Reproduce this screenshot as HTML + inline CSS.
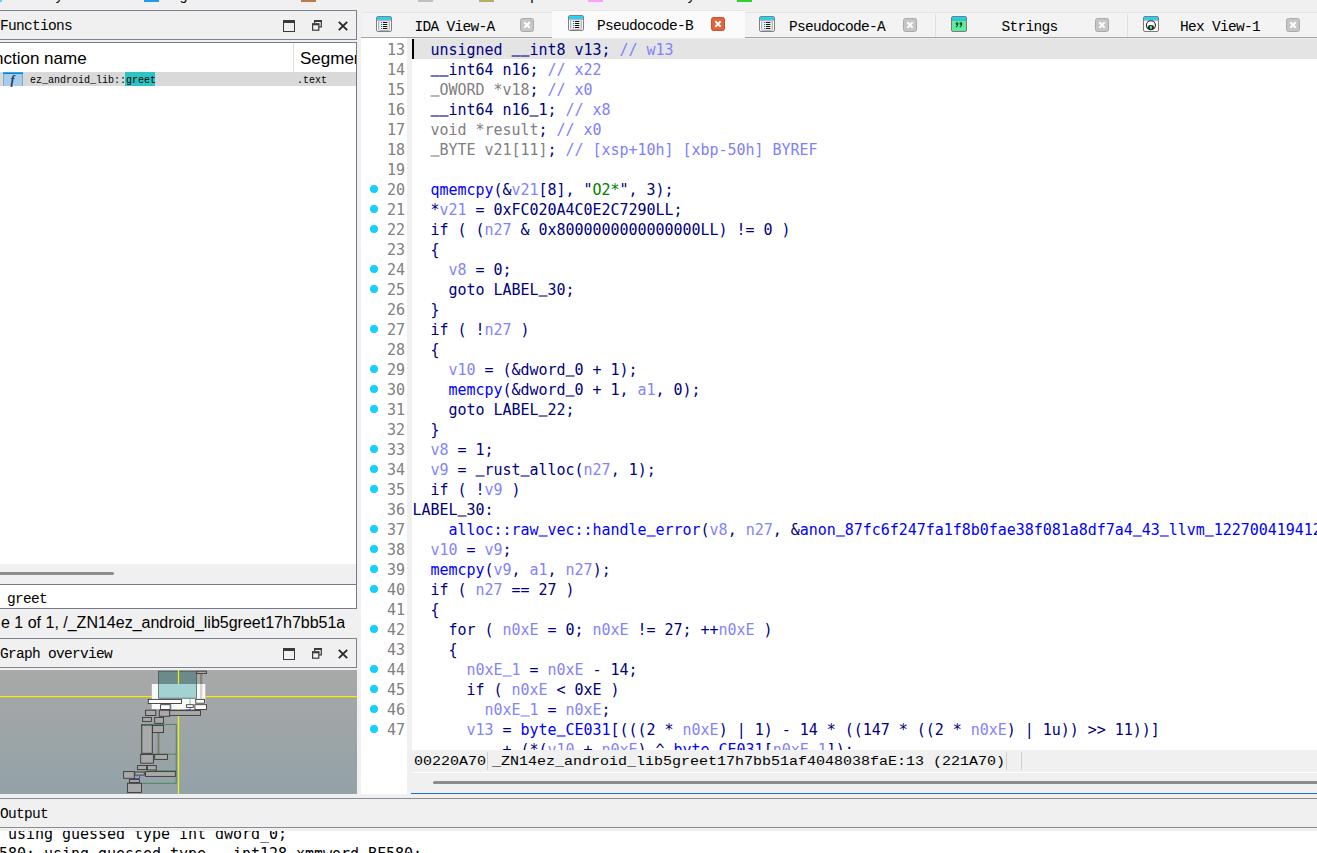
<!DOCTYPE html>
<html>
<head>
<meta charset="utf-8">
<title>IDA</title>
<style>
html,body{margin:0;padding:0;}
body{width:1317px;height:853px;overflow:hidden;background:#f0f0f0;position:relative;font-family:"Liberation Mono",monospace;color:#000;}
.abs{position:absolute;}
.ui{font-family:"Liberation Mono",monospace;font-size:14.5px;letter-spacing:-0.7px;line-height:16px;white-space:pre;color:#000;}
.sans{font-family:"Liberation Sans",sans-serif;font-size:17px;line-height:20px;white-space:pre;color:#000;}
.small{font-family:"Liberation Mono",monospace;font-size:10px;line-height:12px;white-space:pre;color:#000;}
.cf{font-family:"DejaVu Sans Mono","Liberation Mono",monospace;font-size:15px;letter-spacing:-0.03px;line-height:20px;white-space:pre;}
#code{left:412.5px;top:40px;width:905px;height:710px;overflow:hidden;color:#000080;}
#code{white-space:normal;} #code div{height:20px;white-space:pre;}
#nums{left:361px;top:40px;width:44px;height:710px;overflow:hidden;color:#808080;text-align:right;}
#nums{white-space:normal;} #nums div{height:20px;white-space:pre;}
.dot{position:absolute;left:369.6px;width:8.7px;height:8.7px;border-radius:50%;background:#14d0fe;margin-top:-0.4px;}
.u{position:relative;top:-3px;text-shadow:0 0.6px 0 currentColor;}
.t{color:#000080;} .g{color:#808080;} .c{color:#8080ff;} .v{color:#8484fa;} .f{color:#0000ff;} .s{color:#008000;}
</style>
</head>
<body>
<!-- top legend strip -->
<div class="abs" style="left:0;top:0;width:2px;height:2px;background:#4fd8f8"></div>
<div class="abs" style="left:144px;top:0;width:15px;height:2px;background:#1e9df0"></div>
<div class="abs" style="left:301px;top:0;width:15px;height:2px;background:#c07850"></div>
<div class="abs" style="left:418px;top:0;width:15px;height:2px;background:#c0c0c0"></div>
<div class="abs" style="left:479px;top:0;width:15px;height:2px;background:#b0b060"></div>
<div class="abs" style="left:588px;top:0;width:15px;height:2px;background:#ff9cff"></div>
<div class="abs" style="left:737px;top:0;width:15px;height:2px;background:#30d030"></div>

<div class="abs ui" style="left:7px;top:-12px;">Library function</div>
<div class="abs ui" style="left:163px;top:-12px;">Regular function</div>
<div class="abs ui" style="left:320px;top:-12px;">Instruction</div>
<div class="abs ui" style="left:437px;top:-12px;">Data</div>
<div class="abs ui" style="left:498px;top:-12px;">Unexplored</div>
<div class="abs ui" style="left:607px;top:-12px;">External symbol</div>
<div class="abs ui" style="left:756px;top:-12px;">Lumina function</div>
<!-- Functions title -->
<div class="abs" style="left:-2px;top:10px;width:357px;height:28px;border:1px solid #7c8290;background:#f0f0f0"></div>
<div class="abs ui" style="left:0px;top:18px;">Functions</div>
<svg class="abs" style="left:283px;top:20px" width="12" height="12" viewBox="0 0 12 12"><rect x="0.5" y="0.5" width="11" height="11" fill="none" stroke="#3a3a3a"/><rect x="0" y="0" width="12" height="3" fill="#3a3a3a"/></svg><svg class="abs" style="left:312px;top:20px" width="10" height="11" viewBox="0 0 10 11"><path d="M2.6 3 V0.8 H9.3 V6.8 H7" fill="none" stroke="#3a3a3a" stroke-width="1.2"/><rect x="2" y="0" width="7.9" height="2" fill="#3a3a3a"/><rect x="0.6" y="4" width="6.2" height="6.2" fill="none" stroke="#3a3a3a" stroke-width="1.2"/><rect x="0" y="3.3" width="7.4" height="2" fill="#3a3a3a"/></svg><svg class="abs" style="left:338px;top:21px" width="10" height="10" viewBox="0 0 10 10"><path d="M0.8 0.8 L9.2 9.2 M9.2 0.8 L0.8 9.2" stroke="#2a2a2a" stroke-width="1.9" fill="none"/></svg>

<!-- Functions list -->
<div class="abs" style="left:-2px;top:42px;width:357px;height:541px;border:1px solid #747c8c;background:#fff"></div>
<div class="abs sans" style="left:-6px;top:49px;">nction name</div>
<div class="abs" style="left:293px;top:43px;width:1px;height:29px;background:#e0e0e0"></div>
<div class="abs sans" style="left:300px;top:49px;width:56px;overflow:hidden">Segment</div>
<div class="abs" style="left:0;top:72px;width:356px;height:14px;background:#d9d9d9"></div>
<div class="abs" style="left:3px;top:72px;width:20px;height:14px;background:#a8cceb;border-left:1px solid #86a6c6;border-right:1px solid #86a6c6;box-sizing:border-box"></div><div class="abs" style="left:3px;top:72px;width:20px;height:1px;background:#18b4f6"></div><div class="abs" style="left:3px;top:73px;width:20px;height:1px;background:#1a7cbc"></div>
<div class="abs" style="left:10.5px;top:72.5px;font-family:'Liberation Serif',serif;font-style:italic;font-weight:bold;font-size:12px;line-height:14px;color:#183860">f</div>
<div class="abs" style="left:125px;top:72px;width:30px;height:14px;background:#2ac4c4"></div><div class="abs small" style="left:30px;top:75px;">ez_android_lib::greet</div>
<div class="abs small" style="left:297px;top:75px;">.text</div>
<!-- h scrollbar -->
<div class="abs" style="left:0;top:564px;width:356px;height:20px;background:#f0f0f0"></div>
<div class="abs" style="left:-4px;top:572px;width:118px;height:3px;border-radius:2px;background:#8c8c8c"></div>
<!-- search -->
<div class="abs" style="left:0;top:584px;width:356px;height:25px;background:#fff;border-top:1px solid #747c8c;border-bottom:1px solid #747c8c;box-sizing:border-box"></div>
<div class="abs ui" style="left:7px;top:591px;">greet</div>
<div class="abs" style="left:356px;top:42px;width:1px;height:567px;background:#747c8c"></div>
<!-- status -->
<div class="abs sans" style="left:1px;top:613px;width:344px;overflow:hidden;font-size:16px">e 1 of 1, /_ZN14ez_android_lib5greet17h7bb51af4048038faE</div>

<!-- Graph overview title -->
<div class="abs" style="left:-2px;top:638px;width:357px;height:28px;border:1px solid #7c8290;background:#f0f0f0"></div>
<div class="abs ui" style="left:0px;top:646px;">Graph overview</div>
<svg class="abs" style="left:283px;top:648px" width="12" height="12" viewBox="0 0 12 12"><rect x="0.5" y="0.5" width="11" height="11" fill="none" stroke="#3a3a3a"/><rect x="0" y="0" width="12" height="3" fill="#3a3a3a"/></svg><svg class="abs" style="left:312px;top:648px" width="10" height="11" viewBox="0 0 10 11"><path d="M2.6 3 V0.8 H9.3 V6.8 H7" fill="none" stroke="#3a3a3a" stroke-width="1.2"/><rect x="2" y="0" width="7.9" height="2" fill="#3a3a3a"/><rect x="0.6" y="4" width="6.2" height="6.2" fill="none" stroke="#3a3a3a" stroke-width="1.2"/><rect x="0" y="3.3" width="7.4" height="2" fill="#3a3a3a"/></svg><svg class="abs" style="left:338px;top:649px" width="10" height="10" viewBox="0 0 10 10"><path d="M0.8 0.8 L9.2 9.2 M9.2 0.8 L0.8 9.2" stroke="#2a2a2a" stroke-width="1.9" fill="none"/></svg>
<svg class="abs" style="left:0;top:670px" width="357" height="124" viewBox="0 0 357 124"><defs><linearGradient id="gg" x1="0" y1="0" x2="0" y2="1"><stop offset="0" stop-color="#a9a9a9"/><stop offset="0.25" stop-color="#a3a6a7"/><stop offset="1" stop-color="#93a2a8"/></linearGradient></defs><rect x="0" y="0" width="357" height="124" fill="url(#gg)"/><rect x="158.5" y="1.2" width="38" height="27" fill="#6b8a8a" stroke="#3c4c4c" stroke-width="0.7"/><rect x="196.8" y="1.2" width="9.7" height="2.4" fill="#a9a9a9" stroke="#383838" stroke-width="0.9"/><line x1="200.6" y1="3.6" x2="200.6" y2="29" stroke="#b04040" stroke-width="0.6"/><line x1="201.8" y1="3.6" x2="201.8" y2="29" stroke="#308040" stroke-width="0.6"/><rect x="151.8" y="14" width="53.5" height="25" fill="#fff" fill-opacity="0.93"/><rect x="158.8" y="14" width="37.4" height="14.2" fill="#a3d2d2"/><line x1="158.5" y1="14" x2="158.5" y2="28.3" stroke="#3c4c4c" stroke-width="0.7"/><line x1="196.5" y1="14" x2="196.5" y2="28.3" stroke="#3c4c4c" stroke-width="0.7"/><line x1="158.5" y1="28.3" x2="196.5" y2="28.3" stroke="#3c4c4c" stroke-width="0.7"/><line x1="200.6" y1="14" x2="200.6" y2="29" stroke="#e0a0a0" stroke-width="0.6"/><line x1="201.8" y1="14" x2="201.8" y2="29" stroke="#90c8a0" stroke-width="0.6"/><rect x="0" y="26" width="152" height="1.2" fill="#f4f000"/><rect x="205.3" y="26" width="152" height="1.2" fill="#f4f000"/><rect x="177.9" y="0" width="1.2" height="14" fill="#f4f000"/><rect x="177.9" y="39" width="1.2" height="85" fill="#f4f000"/><path d="M165 29 V34 H171 V39" fill="none" stroke="#30c8d0" stroke-width="0.7"/><path d="M190 29 V34" fill="none" stroke="#60b070" stroke-width="0.7"/><rect x="148.3" y="29.4" width="33.2" height="4.1" fill="#ffffff" stroke="#383838" stroke-width="0.9"/><rect x="195.7" y="29.4" width="8.8" height="3.8" fill="#ffffff" stroke="#383838" stroke-width="0.9"/><rect x="160.6" y="34.7" width="9.6" height="4.8" fill="#ffffff" stroke="#383838" stroke-width="0.9"/><rect x="186.6" y="34.7" width="6.7" height="2.7" fill="#ffffff" stroke="#383838" stroke-width="0.9"/><rect x="194.9" y="34.7" width="11.6" height="4.8" fill="#ffffff" stroke="#383838" stroke-width="0.9"/><rect x="141.5" y="54.3" width="34.7" height="29.8" fill="none" stroke="#2c7a3c" stroke-width="0.7"/><path d="M176.2 84 V113.3 H141.5" fill="none" stroke="#2c7a3c" stroke-width="0.7"/><path d="M153.5 100.8 H176.2" fill="none" stroke="#2c7a3c" stroke-width="0.7"/><line x1="158" y1="62.6" x2="158" y2="84.4" stroke="#a04040" stroke-width="0.6"/><line x1="159" y1="62.6" x2="159" y2="84.4" stroke="#308040" stroke-width="0.6"/><rect x="145.5" y="40.2" width="10.3" height="5.3" fill="#a9a9a9" stroke="#383838" stroke-width="0.9"/><rect x="159.3" y="40.2" width="10.4" height="6.1" fill="#a9a9a9" stroke="#383838" stroke-width="0.9"/><rect x="169.7" y="40.6" width="30.8" height="4.8" fill="#a9a9a9" stroke="#383838" stroke-width="0.9"/><rect x="142.6" y="47.4" width="8.8" height="4" fill="#a9a9a9" stroke="#383838" stroke-width="0.9"/><rect x="154.7" y="47.4" width="8.8" height="5.9" fill="#a9a9a9" stroke="#383838" stroke-width="0.9"/><rect x="141.8" y="55.1" width="10.5" height="28.2" fill="#a9a9a9" stroke="#383838" stroke-width="0.9"/><rect x="152.6" y="55.4" width="10.9" height="7.2" fill="#a9a9a9" stroke="#383838" stroke-width="0.9"/><rect x="140.7" y="84.4" width="12.7" height="8.8" fill="#a9a9a9" stroke="#383838" stroke-width="0.9"/><rect x="154.7" y="84.4" width="12.8" height="5" fill="#a9a9a9" stroke="#383838" stroke-width="0.9"/><rect x="137.5" y="95.6" width="9.1" height="4" fill="#a9a9a9" stroke="#383838" stroke-width="0.9"/><rect x="147.4" y="95.6" width="8.9" height="4.4" fill="#a9a9a9" stroke="#383838" stroke-width="0.9"/><rect x="123.6" y="101.6" width="10.7" height="6.7" fill="#a9a9a9" stroke="#383838" stroke-width="0.9"/><rect x="134.8" y="102" width="9.5" height="3.1" fill="#a9a9a9" stroke="#383838" stroke-width="0.9"/><rect x="145.5" y="101.6" width="29.8" height="4.8" fill="#a9a9a9" stroke="#383838" stroke-width="0.9"/><rect x="129.5" y="109.6" width="9.9" height="2.9" fill="#a9a9a9" stroke="#383838" stroke-width="0.9"/><rect x="127.4" y="113.3" width="14.1" height="9.1" fill="#a9a9a9" stroke="#383838" stroke-width="0.9"/><path d="M133 108.5 H139.5 V106" fill="none" stroke="#3030c0" stroke-width="0.7"/><path d="M186 40 H190 V37.5" fill="none" stroke="#3030c0" stroke-width="0.7"/></svg>

<!-- code area -->
<div class="abs" style="left:361px;top:38px;width:956px;height:712px;background:#fff"></div>
<div class="abs" style="left:361px;top:750px;width:46px;height:44px;background:#fff"></div>
<div class="abs" style="left:407px;top:38px;width:5px;height:756px;background:#f0f0f0"></div>
<div class="abs" style="left:412px;top:38px;width:905px;height:1px;background:#ececec"></div><div class="abs" style="left:414px;top:39px;width:903px;height:20px;background:#e4e4e4"></div>
<div class="abs" style="left:412px;top:39px;width:2px;height:20px;background:#000"></div>
<div class="abs" style="left:363px;top:12px;width:954px;height:25px;background:#f3f3f3;border-top:1px solid #e4e4e4;box-sizing:border-box"></div>
<div class="abs" style="left:361px;top:37px;width:956px;height:1px;background:#a4a4a4"></div>
<div class="abs" style="left:935px;top:14px;width:1px;height:23px;background:#e0e0e0"></div>
<div class="abs" style="left:1127px;top:14px;width:1px;height:23px;background:#e0e0e0"></div>
<div class="abs" style="left:552px;top:10px;width:193px;height:28px;background:#fbfbfb;border-top:1px solid #e6e6e6;box-sizing:border-box"></div>
<svg class="abs" style="left:376px;top:16px" width="16" height="16" viewBox="0 0 16 16"><rect x="0.5" y="0.5" width="15" height="15" rx="1.5" fill="#ffffff" stroke="#808080"/><rect x="1" y="1.1" width="14" height="2.6" fill="#0cd4fc"/><rect x="1" y="3.7" width="14" height="0.8" fill="#5a8898"/><rect x="2.5" y="4.7" width="11" height="9.8" rx="1" fill="#e2e2e2" stroke="#b4b4b4"/><rect x="4" y="5.6" width="8" height="8" fill="#f2f2f2"/><g fill="#111"><rect x="7" y="6" width="4.3" height="1"/><rect x="7" y="8" width="4.3" height="1"/><rect x="7" y="10" width="4.3" height="1"/><rect x="7" y="12" width="4.3" height="1"/></g><g fill="#1878c0"><rect x="5" y="6" width="1.2" height="1"/><rect x="5" y="8" width="1.2" height="1"/><rect x="5" y="10" width="1.2" height="1"/><rect x="5" y="12" width="1.2" height="1"/></g></svg>
<div class="abs ui" style="left:414.5px;top:19px">IDA View-A</div>
<svg class="abs" style="left:520px;top:18px" width="14" height="14" viewBox="0 0 14 14"><rect x="0.5" y="0.5" width="13" height="13" rx="2" fill="#c6c6c6" stroke="#aaaaaa"/><path d="M4.3 4.3 L9.7 9.7 M9.7 4.3 L4.3 9.7" stroke="#fff" stroke-width="2" fill="none"/></svg>
<svg class="abs" style="left:568px;top:15px" width="16" height="16" viewBox="0 0 16 16"><rect x="0.5" y="0.5" width="15" height="15" rx="1.5" fill="#ffffff" stroke="#808080"/><rect x="1" y="1.1" width="14" height="2.6" fill="#0cd4fc"/><rect x="1" y="3.7" width="14" height="0.8" fill="#5a8898"/><rect x="2.5" y="4.7" width="11" height="9.8" rx="1" fill="#e2e2e2" stroke="#b4b4b4"/><rect x="4" y="5.6" width="8" height="8" fill="#f2f2f2"/><g fill="#111"><rect x="7" y="6" width="4.3" height="1"/><rect x="7" y="8" width="4.3" height="1"/><rect x="7" y="10" width="4.3" height="1"/><rect x="7" y="12" width="4.3" height="1"/></g><g fill="#1878c0"><rect x="5" y="6" width="1.2" height="1"/><rect x="5" y="8" width="1.2" height="1"/><rect x="5" y="10" width="1.2" height="1"/><rect x="5" y="12" width="1.2" height="1"/></g></svg>
<div class="abs ui" style="left:597px;top:18px">Pseudocode-B</div>
<svg class="abs" style="left:711px;top:17px" width="14" height="14" viewBox="0 0 14 14"><rect x="0.5" y="0.5" width="13" height="13" rx="2" fill="#e2623c" stroke="#c8502c"/><path d="M4.3 4.3 L9.7 9.7 M9.7 4.3 L4.3 9.7" stroke="#fff" stroke-width="2" fill="none"/></svg>
<svg class="abs" style="left:759px;top:16px" width="16" height="16" viewBox="0 0 16 16"><rect x="0.5" y="0.5" width="15" height="15" rx="1.5" fill="#ffffff" stroke="#808080"/><rect x="1" y="1.1" width="14" height="2.6" fill="#0cd4fc"/><rect x="1" y="3.7" width="14" height="0.8" fill="#5a8898"/><rect x="2.5" y="4.7" width="11" height="9.8" rx="1" fill="#e2e2e2" stroke="#b4b4b4"/><rect x="4" y="5.6" width="8" height="8" fill="#f2f2f2"/><g fill="#111"><rect x="7" y="6" width="4.3" height="1"/><rect x="7" y="8" width="4.3" height="1"/><rect x="7" y="10" width="4.3" height="1"/><rect x="7" y="12" width="4.3" height="1"/></g><g fill="#1878c0"><rect x="5" y="6" width="1.2" height="1"/><rect x="5" y="8" width="1.2" height="1"/><rect x="5" y="10" width="1.2" height="1"/><rect x="5" y="12" width="1.2" height="1"/></g></svg>
<div class="abs ui" style="left:789px;top:19px">Pseudocode-A</div>
<svg class="abs" style="left:903px;top:18px" width="14" height="14" viewBox="0 0 14 14"><rect x="0.5" y="0.5" width="13" height="13" rx="2" fill="#c6c6c6" stroke="#aaaaaa"/><path d="M4.3 4.3 L9.7 9.7 M9.7 4.3 L4.3 9.7" stroke="#fff" stroke-width="2" fill="none"/></svg>
<svg class="abs" style="left:951px;top:16px" width="16" height="16" viewBox="0 0 16 16"><rect x="0.5" y="0.5" width="15" height="15" rx="1.5" fill="#5eeaa2" stroke="#7a7a7a"/><rect x="1" y="1.1" width="14" height="2.6" fill="#0cd4fc"/><rect x="1" y="3.7" width="14" height="0.8" fill="#5a8898"/><g fill="#004a1c"><circle cx="6" cy="7.7" r="1.35"/><circle cx="9.9" cy="7.7" r="1.35"/><path d="M6.4 7.7 L7.3 7.7 Q7.3 10.4 5.2 11.6 L4.6 10.8 Q6.2 9.8 6.4 7.7Z"/><path d="M10.3 7.7 L11.2 7.7 Q11.2 10.4 9.1 11.6 L8.5 10.8 Q10.1 9.8 10.3 7.7Z"/></g></svg>
<div class="abs ui" style="left:1001.5px;top:19px">Strings</div>
<svg class="abs" style="left:1095px;top:18px" width="14" height="14" viewBox="0 0 14 14"><rect x="0.5" y="0.5" width="13" height="13" rx="2" fill="#c6c6c6" stroke="#aaaaaa"/><path d="M4.3 4.3 L9.7 9.7 M9.7 4.3 L4.3 9.7" stroke="#fff" stroke-width="2" fill="none"/></svg>
<svg class="abs" style="left:1143px;top:16px" width="16" height="16" viewBox="0 0 16 16"><rect x="0.5" y="0.5" width="15" height="15" rx="1.5" fill="#fcfcfc" stroke="#7a7a7a"/><rect x="1" y="1.1" width="14" height="2.6" fill="#0cd4fc"/><rect x="1" y="3.7" width="14" height="0.8" fill="#5a8898"/><circle cx="7.9" cy="9.2" r="4.5" fill="#fff" stroke="#222" stroke-width="1.1"/><ellipse cx="7.9" cy="11.4" rx="3" ry="2.3" fill="#1a1a1a"/><ellipse cx="7.9" cy="11.4" rx="1.3" ry="1.7" fill="#30f088"/></svg>
<div class="abs ui" style="left:1180px;top:19px">Hex View-1</div>
<svg class="abs" style="left:1286px;top:18px" width="14" height="14" viewBox="0 0 14 14"><rect x="0.5" y="0.5" width="13" height="13" rx="2" fill="#c6c6c6" stroke="#aaaaaa"/><path d="M4.3 4.3 L9.7 9.7 M9.7 4.3 L4.3 9.7" stroke="#fff" stroke-width="2" fill="none"/></svg>
<div class="abs cf" id="nums">
<div>13</div>
<div>14</div>
<div>15</div>
<div>16</div>
<div>17</div>
<div>18</div>
<div>19</div>
<div>20</div>
<div>21</div>
<div>22</div>
<div>23</div>
<div>24</div>
<div>25</div>
<div>26</div>
<div>27</div>
<div>28</div>
<div>29</div>
<div>30</div>
<div>31</div>
<div>32</div>
<div>33</div>
<div>34</div>
<div>35</div>
<div>36</div>
<div>37</div>
<div>38</div>
<div>39</div>
<div>40</div>
<div>41</div>
<div>42</div>
<div>43</div>
<div>44</div>
<div>45</div>
<div>46</div>
<div>47</div>
<div></div>
</div>
<div class="dot" style="top:185px"></div>
<div class="dot" style="top:205px"></div>
<div class="dot" style="top:225px"></div>
<div class="dot" style="top:265px"></div>
<div class="dot" style="top:285px"></div>
<div class="dot" style="top:325px"></div>
<div class="dot" style="top:365px"></div>
<div class="dot" style="top:385px"></div>
<div class="dot" style="top:405px"></div>
<div class="dot" style="top:445px"></div>
<div class="dot" style="top:465px"></div>
<div class="dot" style="top:485px"></div>
<div class="dot" style="top:525px"></div>
<div class="dot" style="top:545px"></div>
<div class="dot" style="top:565px"></div>
<div class="dot" style="top:585px"></div>
<div class="dot" style="top:625px"></div>
<div class="dot" style="top:665px"></div>
<div class="dot" style="top:685px"></div>
<div class="dot" style="top:705px"></div>
<div class="dot" style="top:725px"></div>
<div class="abs cf" id="code">
<div>  <span class="t">unsigned <span class="u">__</span>int8 v13;</span> <span class="c">// w13</span></div>
<div>  <span class="t"><span class="u">__</span>int64 n16;</span> <span class="c">// x22</span></div>
<div>  <span class="g"><span class="u">_</span>OWORD *v18</span><span class="t">;</span> <span class="c">// x0</span></div>
<div>  <span class="t"><span class="u">__</span>int64 n16<span class="u">_</span>1;</span> <span class="c">// x8</span></div>
<div>  <span class="g">void *result</span><span class="t">;</span> <span class="c">// x0</span></div>
<div>  <span class="g"><span class="u">_</span>BYTE v21[11]</span><span class="t">;</span> <span class="c">// [xsp+10h] [xbp-50h] BYREF</span></div>
<div></div>
<div>  <span class="f">qmemcpy</span>(&amp;<span class="v">v21</span>[8], "<span class="s">O2*</span>", 3);</div>
<div>  *<span class="v">v21</span> = 0xFC020A4C0E2C7290LL;</div>
<div>  if ( (<span class="v">n27</span> &amp; 0x8000000000000000LL) != 0 )</div>
<div>  {</div>
<div>    <span class="v">v8</span> = 0;</div>
<div>    goto LABEL<span class="u">_</span>30;</div>
<div>  }</div>
<div>  if ( !<span class="v">n27</span> )</div>
<div>  {</div>
<div>    <span class="v">v10</span> = (&amp;dword<span class="u">_</span>0 + 1);</div>
<div>    <span class="f">memcpy</span>(&amp;dword<span class="u">_</span>0 + 1, <span class="v">a1</span>, 0);</div>
<div>    goto LABEL<span class="u">_</span>22;</div>
<div>  }</div>
<div>  <span class="v">v8</span> = 1;</div>
<div>  <span class="v">v9</span> = <span class="u">_</span>rust<span class="u">_</span>alloc(<span class="v">n27</span>, 1);</div>
<div>  if ( !<span class="v">v9</span> )</div>
<div>LABEL<span class="u">_</span>30:</div>
<div>    <span class="f">alloc::raw<span class="u">_</span>vec::handle<span class="u">_</span>error</span>(<span class="v">v8</span>, <span class="v">n27</span>, &amp;<span class="f">anon<span class="u">_</span>87fc6f247fa1f8b0fae38f081a8df7a4<span class="u">_</span>43<span class="u">_</span>llvm<span class="u">_</span>12270041941268</span></div>
<div>  <span class="v">v10</span> = <span class="v">v9</span>;</div>
<div>  <span class="f">memcpy</span>(<span class="v">v9</span>, <span class="v">a1</span>, <span class="v">n27</span>);</div>
<div>  if ( <span class="v">n27</span> == 27 )</div>
<div>  {</div>
<div>    for ( <span class="v">n0xE</span> = 0; <span class="v">n0xE</span> != 27; ++<span class="v">n0xE</span> )</div>
<div>    {</div>
<div>      <span class="v">n0xE<span class="u">_</span>1</span> = <span class="v">n0xE</span> - 14;</div>
<div>      if ( <span class="v">n0xE</span> &lt; 0xE )</div>
<div>        <span class="v">n0xE<span class="u">_</span>1</span> = <span class="v">n0xE</span>;</div>
<div>      <span class="v">v13</span> = <span class="f">byte<span class="u">_</span>CE031</span>[(((2 * <span class="v">n0xE</span>) | 1) - 14 * ((147 * ((2 * <span class="v">n0xE</span>) | 1u)) &gt;&gt; 11))]</div>
<div>          + (*(<span class="v">v10</span> + <span class="v">n0xE</span>) ^ <span class="f">byte<span class="u">_</span>CE031</span>[<span class="v">n0xE<span class="u">_</span>1</span>]);</div>
</div>
<!-- code status line -->
<div class="abs" style="left:412px;top:750px;width:905px;height:22px;background:#f0f0f0"></div>
<div class="abs" style="left:412px;top:772px;width:905px;height:1px;background:#fff"></div>
<div class="abs" style="left:414px;top:753px;font-family:'Liberation Mono',monospace;font-size:15px;line-height:17px;white-space:pre;color:#000;transform:scaleY(0.88);transform-origin:0 12.5px">00220A70</div><div class="abs" style="left:492px;top:753px;font-family:'Liberation Mono',monospace;font-size:15px;line-height:17px;white-space:pre;color:#000;transform:scaleY(0.88);transform-origin:0 12.5px">_ZN14ez_android_lib5greet17h7bb51af4048038faE:13 (221A70)</div>
<div class="abs" style="left:487px;top:752px;width:1px;height:18px;background:#d0d0d0"></div>
<div class="abs" style="left:1006px;top:752px;width:1px;height:18px;background:#d0d0d0"></div>
<div class="abs" style="left:1021px;top:752px;width:1px;height:18px;background:#d0d0d0"></div>
<div class="abs" style="left:433px;top:781px;width:900px;height:3px;border-radius:2px;background:#8c8c8c"></div>
<div class="abs" style="left:411px;top:793px;width:906px;height:1px;background:#1e6fc8"></div>

<!-- Output -->
<div class="abs" style="left:0;top:798px;width:1317px;height:1px;background:#868c98"></div>
<div class="abs" style="left:0;top:827px;width:1317px;height:1px;background:#868c98"></div>
<div class="abs ui" style="left:0px;top:806px;">Output</div>
<div class="abs" style="left:0;top:831px;width:1317px;height:22px;background:#fff;overflow:hidden">
<div class="abs cf" style="left:-1px;top:-7px;color:#000"> using guessed type int dword_0;
580: using guessed type __int128 xmmword_BF580;</div>
</div>
</body>
</html>
